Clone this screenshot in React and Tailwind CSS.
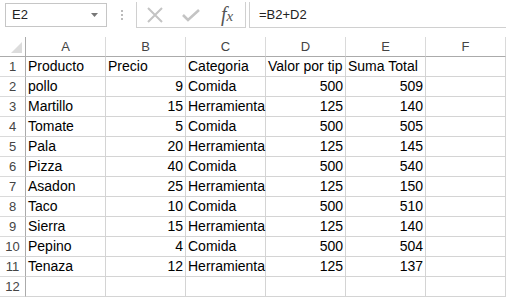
import React from "react";

const rows = [
  ["Producto", "Precio", "Categoria", "Valor por tip", "Suma Total"],
  ["pollo", 9, "Comida", 500, 509],
  ["Martillo", 15, "Herramienta", 125, 140],
  ["Tomate", 5, "Comida", 500, 505],
  ["Pala", 20, "Herramienta", 125, 145],
  ["Pizza", 40, "Comida", 500, 540],
  ["Asadon", 25, "Herramienta", 125, 150],
  ["Taco", 10, "Comida", 500, 510],
  ["Sierra", 15, "Herramienta", 125, 140],
  ["Pepino", 4, "Comida", 500, 504],
  ["Tenaza", 12, "Herramienta", 125, 137],
  ["", "", "", "", ""],
];

const cols = ["A", "B", "C", "D", "E", "F"];

export default function App() {
  return (
    <div
      className="w-[506px] h-[297px] bg-white overflow-hidden text-black"
      style={{ fontFamily: '"Liberation Sans", Arial, sans-serif' }}
    >
      {/* Formula bar */}
      <div className="h-[37px] flex items-start pt-[3px] bg-white">
        <div className="ml-[5px] w-[102px] h-[24px] border border-[#c6c6c6] flex items-center justify-between px-[6px] text-[13px] text-[#222]">
          <span>E2</span>
          <svg width="8" height="5" viewBox="0 0 8 5" className="mr-[1px]">
            <path d="M0 0 H7 L3.5 4 Z" fill="#777" />
          </svg>
        </div>
        <div className="w-[29px] h-[24px] flex flex-col items-center justify-center gap-[2px]">
          <div className="w-[2px] h-[2px] bg-[#bbb]" />
          <div className="w-[2px] h-[2px] bg-[#bbb]" />
          <div className="w-[2px] h-[2px] bg-[#bbb]" />
        </div>
        <div className="w-[110px] h-[26px] -mt-[1px] border-x border-b border-[#d0d0d0] flex items-center">
          <div className="w-[36px] flex justify-center">
            <svg width="18" height="16" viewBox="0 0 18 16">
              <path d="M2 1 L16 15 M16 1 L2 15" stroke="#c4c4c4" strokeWidth="2" fill="none" />
            </svg>
          </div>
          <div className="w-[36px] flex justify-center">
            <svg width="20" height="16" viewBox="0 0 20 16">
              <path d="M2 8 L7 13 L18 3" stroke="#c4c4c4" strokeWidth="2.6" fill="none" />
            </svg>
          </div>
          <div
            className="w-[36px] flex justify-center text-[20px] italic text-[#555] leading-none -mt-[2px]"
            style={{ fontFamily: '"Liberation Serif", "Times New Roman", serif' }}
          >
            <span>f</span>
            <span className="text-[15px] mt-[5px]">x</span>
          </div>
        </div>
        <div className="ml-[3px] flex-1 h-[26px] -mt-[1px] border-l border-b border-[#d0d0d0] flex items-center pl-[9px] text-[13px] text-[#222]">
          =B2+D2
        </div>
      </div>

      {/* Grid */}
      <div className="grid grid-cols-[26px_repeat(6,80px)]">
        {/* Header row */}
        <div className="h-[20px] border-r border-b border-[#ababab] relative bg-white">
          <svg width="12" height="12" viewBox="0 0 12 12" className="absolute right-[2px] bottom-[2px]">
            <path d="M11 0 L11 11 L0 11 Z" fill="#dcdcdc" />
          </svg>
        </div>
        {cols.map((c) => (
          <div
            key={c}
            className="h-[20px] border-r border-[#dadada] border-b border-b-[#ababab] flex items-center justify-center text-[13px] text-[#444]"
          >
            {c}
          </div>
        ))}
        {rows.map((r, i) => (
          <React.Fragment key={i}>
            <div className="h-[20px] border-r border-r-[#ababab] border-b border-b-[#dadada] flex items-center justify-center text-[13px] text-[#444]">
              {i + 1}
            </div>
            {r.map((v, j) => (
              <div
                key={j}
                className={`h-[20px] border-r border-b border-[#d4d4d4] text-[14px] leading-[19px] whitespace-nowrap overflow-visible relative ${
                  typeof v === "number" ? "text-right pr-[2px]" : "pl-[2px]"
                }`}
              >
                {v}
              </div>
            ))}
            <div className="h-[20px] border-r border-b border-[#d4d4d4]" />
          </React.Fragment>
        ))}
      </div>
    </div>
  );
}
